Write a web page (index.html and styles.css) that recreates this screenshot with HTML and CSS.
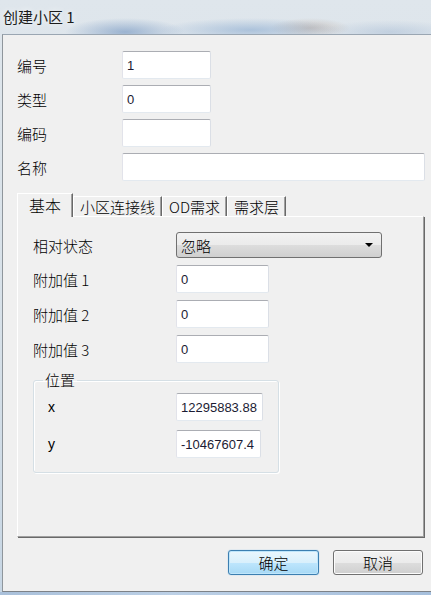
FILE: index.html
```html
<!DOCTYPE html>
<html lang="zh">
<head>
    <meta charset="UTF-8">
    <meta name="viewport" content="width=device-width, initial-scale=1.0">
    <title>创建小区 1</title>
    <link rel="stylesheet" href="styles.css">
</head>
<body>
    <div class="frame">
        <div class="titlebar">创建小区 1</div>

        <div class="window">
            <div class="main-form">
                <label>编号</label>
                <input type="text" class="short" value="1">
                <label>类型</label>
                <input type="text" class="short" value="0">
                <label>编码</label>
                <input type="text" class="short" value="">
                <label>名称</label>
                <input type="text" class="long" value="">
            </div>

            <div class="tabs">
                <div class="tab active w1">基本</div>
                <div class="tab w2">小区连接线</div>
                <div class="tab w3">OD需求</div>
                <div class="tab w4">需求层</div>
            </div>

            <div class="tab-panel">
                <div class="panel-form">
                    <label>相对状态</label>
                    <div class="select">
                        <span>忽略</span>
                        <i class="arrow"></i>
                    </div>
                    <label>附加值 1</label>
                    <input type="text" class="mid" value="0">
                    <label>附加值 2</label>
                    <input type="text" class="mid" value="0">
                    <label>附加值 3</label>
                    <input type="text" class="mid" value="0">
                </div>

                <fieldset class="group">
                    <legend>位置</legend>
                    <div class="group-form">
                        <label>x</label>
                        <input type="text" class="coord-x" value="12295883.88">
                        <label>y</label>
                        <input type="text" class="coord-y" value="-10467607.4">
                    </div>
                </fieldset>
            </div>

            <div class="buttons">
                <button class="btn default">确定</button>
                <button class="btn cancel">取消</button>
            </div>
        </div>
    </div>
</body>
</html>
```

FILE: styles.css
```css
* {
    box-sizing: border-box;
}
html, body {
    margin: 0;
    padding: 0;
}
body {
    width: 431px;
    height: 595px;
    overflow: hidden;
    font-family: "Noto Sans CJK SC", "Liberation Sans", sans-serif;
    font-size: 15px;
    font-weight: 300;
    color: #000;
}
.frame {
    height: 595px;
    padding-left: 2px;
    background:
        radial-gradient(ellipse 60px 14px at 125px 32px, rgba(110,145,190,0.6), transparent),
        radial-gradient(ellipse 90px 12px at 250px 30px, rgba(130,165,205,0.55), transparent),
        radial-gradient(ellipse 40px 10px at 310px 28px, rgba(160,130,110,0.35), transparent),
        radial-gradient(ellipse 70px 12px at 390px 32px, rgba(150,175,205,0.4), transparent),
        linear-gradient(180deg, #dfe6ec 0%, #d6e0e8 60%, #c7d6e4 100%);
    position: relative;
}
.frame::after {
    content: "";
    position: absolute;
    left: 0;
    right: 0;
    bottom: 0;
    height: 3px;
    background: linear-gradient(90deg, #a9c0da, #bcd0e6 40%, #a6bfdc);
}
.titlebar {
    height: 34px;
    padding-left: 1px;
    line-height: 34px;
    font-size: 15px;
    font-weight: 400;
    color: #1c1c1c;
    text-shadow: 0 0 6px rgba(255,255,255,0.9);
}
.window {
    width: 429px;
    height: 558px;
    background: #f0f0f0;
    border-top: 1px solid #9aa6b2;
    border-left: 1px solid #8f969c;
    border-bottom: 1px solid #7d8288;
    padding: 16px 0 0 14px;
}

/* верхняя форма */
.main-form {
    display: grid;
    grid-template-columns: 105px auto;
    grid-auto-rows: 28px;
    row-gap: 6px;
    align-items: center;
}
input {
    height: 28px;
    border: 1px solid;
    border-color: #abadb3 #dbdfe6 #e3e9ef #e2e3ea;
    border-radius: 2px;
    background: #fff;
    padding: 0 1px 0 4px;
    font-family: "Liberation Sans", sans-serif;
    font-size: 13px;
    color: #1b1b33;
    outline: none;
}
.short { width: 89px; }
.long { width: 303px; }
.mid { width: 93px; }

/* вкладки */
.tabs {
    display: flex;
    align-items: flex-end;
    height: 23px;
    margin-top: 12px;
}
.tab {
    height: 20px;
    line-height: 19px;
    text-align: center;
    font-size: 15px;
    border-top: 1px solid #fff;
    border-left: 1px solid #fff;
    border-right: 1px solid #696969;
    box-shadow: inset -1px 0 0 #a0a0a0;
    background: #f0f0f0;
}
.tab.active {
    height: 24px;
    margin-bottom: -1px;
    line-height: 22px;
    position: relative;
    z-index: 1;
    font-size: 16px;
}
.w1 { width: 56px; }
.w2 { width: 89px; }
.w3 { width: 65px; }
.w4 { width: 59px; }

.tab-panel {
    width: 407px;
    height: 321px;
    border: 1px solid;
    border-color: #fff #a0a0a0 #a0a0a0 #fff;
    box-shadow: 1px 1px 0 #696969;
    padding: 15px 0 0 15px;
}
.panel-form {
    display: grid;
    grid-template-columns: 143px auto;
    grid-template-rows: 26px 28px 28px 28px;
    row-gap: 7px;
    align-items: center;
}
.select {
    width: 206px;
    height: 26px;
    border: 1px solid #707070;
    border-radius: 3px;
    background: linear-gradient(180deg, #f2f2f2 0%, #ebebeb 50%, #dddddd 51%, #cfcfcf 100%);
    display: flex;
    align-items: center;
    justify-content: space-between;
    padding: 0 8px 0 4px;
}
.arrow {
    width: 0;
    height: 0;
    border-left: 4px solid transparent;
    border-right: 4px solid transparent;
    border-top: 4px solid #000;
}

/* группа Положение */
.group {
    width: 246px;
    margin: 9px 0 0 0;
    padding: 0 0 14px 9px;
    border: 1px solid #d5dfe5;
    border-radius: 3px;
    box-shadow: inset 1px 1px 0 #fff, 1px 1px 0 #fff;
}
.group legend {
    padding: 0 2px;
    line-height: 16px;
    font-size: 15px;
}
.group-form {
    display: grid;
    grid-template-columns: 128px auto;
    grid-auto-rows: 28px;
    row-gap: 9px;
    align-items: center;
    padding: 5px 0 0 5px;
}
.group-form label {
    font-family: "Liberation Sans", sans-serif;
    font-size: 14px;
    font-weight: 400;
}
.coord-x { width: 87px; }
.coord-y { width: 85px; }

/* кнопки */
.buttons {
    display: flex;
    justify-content: flex-end;
    gap: 14px;
    margin-top: 13px;
    padding-right: 8px;
}
.btn {
    height: 25px;
    border-radius: 3px;
    font-family: "Noto Sans CJK SC", sans-serif;
    font-size: 15px;
    font-weight: 300;
    line-height: 20px;
    color: #000;
    padding: 0;
    cursor: pointer;
}
.btn.default {
    width: 91px;
    border: 1px solid #3c7fb1;
    background: linear-gradient(180deg, #eaf6fd 0%, #d9f0fc 50%, #bee6fd 51%, #a7d9f5 100%);
    box-shadow: inset 0 0 0 1px #bfe6fb, 0 0 1px #5ab0e6;
}
.btn.cancel {
    width: 90px;
    border: 1px solid #707070;
    background: linear-gradient(180deg, #f2f2f2 0%, #ebebeb 50%, #dddddd 51%, #cfcfcf 100%);
    box-shadow: inset 0 0 0 1px #fcfcfc;
}
```
